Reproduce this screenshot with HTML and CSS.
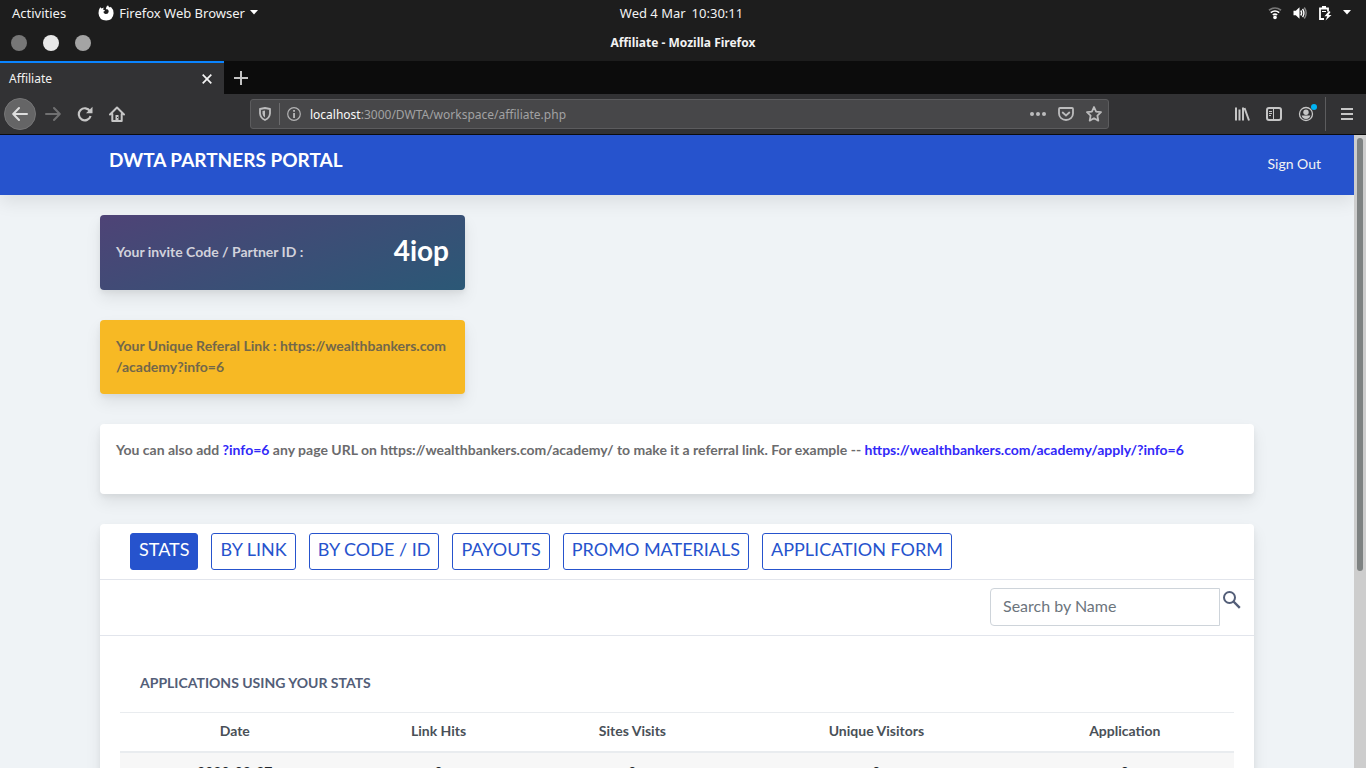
FILE: index.html
```html
<!DOCTYPE html>
<html lang="en">
<head>
<meta charset="utf-8">
<title>Affiliate</title>
<link rel="stylesheet" href="styles.css">
</head>
<body>
<div class="topbar">
  <div class="topbar-left">
    <button class="plain" type="button">Activities</button>
    <button class="plain app-menu" type="button">
      <svg width="16" height="16" viewBox="0 0 16 16"><path fill="#fff" d="M2.2 2.2 3.6 3.6Q4.600 2.700 6 2.800Q5 3.500 5.200 4.700L7 5.200Q6.700 6.400 5.400 6.800Q5.500 8.700 7.600 9Q10.300 9.200 10.700 6.800Q10.800 5 9.400 4.200L7.800 4.300Q8 1.500 10 .3Q10.600 2 12 2.600L12.800 1.800Q15.700 4.500 15.600 8.200Q15.200 15 8.200 15.600Q1 15.200.5 8.200Q.5 4.600 2.200 2.200Z"/></svg>
      <span>Firefox Web Browser</span>
      <svg width="8" height="5" viewBox="0 0 8 5"><path fill="#fff" d="M0 0h8L4 4.500z"/></svg>
    </button>
  </div>
  <div class="clock"><span>Wed 4 Mar</span><span>10:30:11</span></div>
  <div class="topbar-right">
    <svg width="14" height="14" viewBox="0 0 14 14" fill="none" stroke-width="1.700"><path stroke="#777" d="M1 4.200Q7-.2 13 4.200"/><path stroke="#fff" d="M2.800 6.600Q7 3.400 11.200 6.600M4.800 8.900Q7 7.200 9.200 8.900"/><circle cx="7" cy="11.400" r="1.800" fill="#fff"/></svg>
    <svg width="14" height="14" viewBox="0 0 14 14" fill="none" stroke-width="1.400"><path fill="#fff" d="M.5 4.700h2.300L6.500 1.200v11.600L2.800 9.300H.5z"/><path stroke="#fff" d="M7.800 4.500Q9.500 7 7.800 9.500M9.600 2.800Q12.300 7 9.600 11.200"/><path stroke="#888" d="M11.300 1.500Q15 7 11.300 12.500"/></svg>
    <svg width="14" height="16" viewBox="0 0 14 16"><path fill="none" stroke="#fff" stroke-width="1.800" d="M6 14H2V3.500H10V6.500"/><path fill="#fff" d="M4 1h4v2H4zM4 6h4v1H4z"/><path fill="#fff" d="M11 6 6.500 11.200h2.800L7.500 15.500 13.500 10h-3l2-3z"/></svg>
    <svg width="8" height="5" viewBox="0 0 8 5"><path fill="#fff" d="M0 0h8L4 4.500z"/></svg>
  </div>
</div>
<div class="titlebar">
  <div class="window-buttons"><button type="button" class="dot dot-dim" aria-label="Close"></button><button type="button" class="dot dot-bright" aria-label="Minimise"></button><button type="button" class="dot dot-mid" aria-label="Maximise"></button></div>
  <div class="window-title">Affiliate - Mozilla Firefox</div>
</div>
<div class="tabstrip">
  <div class="tab">
    <span>Affiliate</span>
    <button class="plain" type="button" aria-label="Close tab"><svg width="10" height="10" viewBox="0 0 10 10"><path stroke="#f5f5f5" stroke-width="1.700" d="m.7.7 8.600 8.600m0-8.600L.7 9.300"/></svg></button>
  </div>
  <button class="plain new-tab" type="button" aria-label="New tab"><svg width="14" height="14" viewBox="0 0 14 14"><path stroke="#c4c4c4" stroke-width="2" d="M7 0v14M0 7h14"/></svg></button>
</div>
<div class="toolbar">
  <div class="nav-buttons">
    <button type="button" class="back" aria-label="Back"><svg width="16" height="16" viewBox="0 0 16 16"><path fill="none" stroke="#dedede" stroke-width="2" stroke-linecap="round" stroke-linejoin="round" d="M15 8H1.500M7 2 1.200 8 7 14"/></svg></button>
    <button type="button" class="plain" aria-label="Forward"><svg width="16" height="16" viewBox="0 0 16 16"><path fill="none" stroke="#707071" stroke-width="2" stroke-linecap="round" stroke-linejoin="round" d="M1 8h13.500M9 2l5.800 6L9 14"/></svg></button>
    <button type="button" class="plain" aria-label="Reload"><svg width="16" height="16" viewBox="0 0 16 16"><path fill="none" stroke="#c6c6c6" stroke-width="2.200" d="M13 5.200A6 6 0 1 0 13.600 10"/><path fill="#c6c6c6" d="M15.500.8v6.400H9z"/></svg></button>
    <button type="button" class="plain" aria-label="Home"><svg width="16" height="16" viewBox="0 0 16 16"><path fill="none" stroke="#c6c6c6" stroke-width="2" stroke-linejoin="round" stroke-linecap="round" d="M1 8.500 8 1.500l7 7M3.300 8v7h9.400V8"/><path fill="#c6c6c6" d="M6.500 9h3v5h-3z"/><path fill="#323234" d="M8 11h1v1H8z"/></svg></button>
  </div>
  <div class="urlbar">
    <svg width="12" height="14" viewBox="0 0 12 14"><path fill="none" stroke="#bcbcbd" stroke-width="1.800" stroke-linejoin="round" d="M6 1 11 2v4.500Q10.600 11 6 13Q1.400 11 1 6.500V2z"/><path fill="#bcbcbd" d="M6 3.500v7Q3.800 9.500 3.500 6.500V4z"/></svg>
    <span class="url-divider"></span>
    <svg width="14" height="14" viewBox="0 0 14 14"><circle cx="7" cy="7" r="6.300" fill="none" stroke="#b4b4b5" stroke-width="1.200"/><path fill="#b4b4b5" d="M6.100 3h1.900v1.800H6.100zM6.100 6h1.900v5H6.100z"/></svg>
    <div class="url"><strong>localhost</strong>:3000/DWTA/workspace/affiliate.php</div>
    <div class="url-actions">
      <svg width="16" height="16" viewBox="0 0 16 16"><g fill="#bcbcbd"><circle cx="2" cy="8" r="2"/><circle cx="8" cy="8" r="2"/><circle cx="14" cy="8" r="2"/></g></svg>
      <svg width="16" height="16" viewBox="0 0 16 16"><path fill="none" stroke="#bcbcbd" stroke-width="1.800" stroke-linejoin="round" d="M2 2h12q1 0 1 1v4.500a7 6.500 0 0 1-14 0V3q0-1 1-1z"/><path fill="none" stroke="#bcbcbd" stroke-width="1.800" stroke-linecap="round" d="m4.700 6.500 3.300 3 3.300-3"/></svg>
      <svg width="16" height="16" viewBox="0 0 16 16"><path fill="none" stroke="#bcbcbd" stroke-width="1.800" stroke-linejoin="round" d="m8 1 2.100 4.600 4.900.6-3.600 3.400.9 5L8 12.200l-4.300 2.400.9-5L1 6.200l4.900-.6z"/></svg>
    </div>
  </div>
  <div class="tool-buttons">
    <button type="button" class="plain" aria-label="Library"><svg width="16" height="16" viewBox="0 0 16 16"><path stroke="#c6c6c6" stroke-width="2" d="M2 1.500v13M5.500 3.500v11M9 1.500v13M10.500 2l4.500 12.500"/></svg></button>
    <button type="button" class="plain" aria-label="Sidebar"><svg width="16" height="16" viewBox="0 0 16 16"><rect x="1" y="2" width="14" height="12" rx="2" fill="none" stroke="#c6c6c6" stroke-width="2"/><path stroke="#c6c6c6" d="M7.500 3v10M3 5.500h3M3 7.500h3M3 9.500h2"/></svg></button>
    <button type="button" class="plain account" aria-label="Account"><svg width="16" height="16" viewBox="0 0 16 16"><circle cx="8" cy="8" r="6.500" fill="none" stroke="#c6c6c6" stroke-width="1.300"/><circle cx="8" cy="6.200" r="2.700" fill="#c6c6c6"/><path fill="#c6c6c6" d="M3.600 9.500h8.800Q11.500 12.800 8 13Q4.500 12.800 3.600 9.500z"/></svg><span class="account-dot"></span></button>
    <span class="tool-divider"></span>
    <button type="button" class="plain" aria-label="Menu"><svg width="12" height="14" viewBox="0 0 12 14"><path stroke="#c6c6c6" stroke-width="2" d="M0 2h12M0 7h12M0 12h12"/></svg></button>
  </div>
</div>
<div class="viewport">
  <div class="page">
    <header class="site-header">
      <h1>DWTA PARTNERS PORTAL</h1>
      <a href="#">Sign Out</a>
    </header>
    <main class="content">
      <section class="card invite">
        <span>Your invite Code / Partner ID :</span>
        <strong>4iop</strong>
      </section>
      <section class="card referral">Your Unique Referal Link : https://wealthbankers.com<wbr>/academy?info=6</section>
      <section class="card hint">You can also add <b>?info=6</b> any page URL on https://wealthbankers.com/academy/ to make it a referral link. For example -- <b>https://wealthbankers.com/academy/apply/?info=6</b></section>
      <section class="card panel">
        <nav class="tabs">
          <button type="button" class="active">STATS</button>
          <button type="button">BY LINK</button>
          <button type="button">BY CODE / ID</button>
          <button type="button">PAYOUTS</button>
          <button type="button">PROMO MATERIALS</button>
          <button type="button">APPLICATION FORM</button>
        </nav>
        <form class="search">
          <input type="text" placeholder="Search by Name" aria-label="Search by Name">
          <button type="button" class="plain" aria-label="Search"><svg width="18" height="18" viewBox="0 0 18 18"><circle cx="6.500" cy="6.500" r="5.500" fill="none" stroke="#535e78" stroke-width="2"/><path stroke="#535e78" stroke-width="2.400" d="m10.500 10.500 6.300 6.300"/></svg></button>
        </form>
        <h2>APPLICATIONS USING YOUR STATS</h2>
        <table class="stats">
          <thead><tr><th class="c-date">Date</th><th class="c-hits">Link Hits</th><th class="c-visits">Sites Visits</th><th class="c-unique">Unique Visitors</th><th class="c-app">Application</th></tr></thead>
          <tbody><tr><td>2020-02-27</td><td>0</td><td>0</td><td>0</td><td>0</td></tr></tbody>
        </table>
      </section>
    </main>
  </div>
  <div class="scrollbar"><div class="thumb"></div></div>
</div>
</body>
</html>
```
FILE: styles.css
```css
* { box-sizing: border-box; }
body {
  margin: 0;
  height: 100vh;
  display: flex;
  flex-direction: column;
  overflow: hidden;
  font-family: "Noto Sans", "Open Sans", sans-serif;
  font-size: 13px;
  color: #f2f2f2;
  background: #1d1d1d;
}
svg { display: block; flex: none; }
button { font: inherit; cursor: pointer; }
.plain {
  display: flex;
  align-items: center;
  padding: 0;
  border: 0;
  background: none;
  color: inherit;
}

/* Desktop bar */
.topbar {
  flex: none;
  display: grid;
  grid-template-columns: 1fr auto 1fr;
  align-items: center;
  height: 25px;
  padding: 0 15px 0 12px;
}
.topbar-left { display: flex; gap: 32px; }
.app-menu { gap: 5px; }
.clock { display: flex; gap: 6px; }
.topbar-right { display: flex; align-items: center; justify-content: flex-end; gap: 11px; }

/* Window title */
.titlebar {
  flex: none;
  display: grid;
  grid-template-columns: 1fr auto 1fr;
  align-items: center;
  height: 36px;
  padding: 0 11px;
}
.window-buttons { display: flex; gap: 16px; }
.dot { width: 16px; height: 16px; padding: 0; border: 0; border-radius: 50%; }
.dot-dim { background: #777; }
.dot-bright { background: #e8e8e8; }
.dot-mid { background: #a4a4a4; }
.window-title { padding-bottom: 2px; font-size: 12px; font-weight: 700; }

/* Browser tabs */
.tabstrip { flex: none; display: flex; height: 33px; background: #0c0c0c; }
.tab {
  display: flex;
  align-items: center;
  justify-content: space-between;
  width: 224px;
  padding: 0 12px 0 9px;
  border-top: 2px solid #0a84ff;
  background: #323234;
  font-size: 12px;
}
.new-tab { padding: 0 10px; }

/* Navigation toolbar */
.toolbar {
  flex: none;
  display: flex;
  align-items: center;
  height: 41px;
  border-bottom: 1px solid #0c0c0d;
  background: #323234;
}
.nav-buttons { display: flex; align-items: center; gap: 16px; padding-left: 4px; }
.back {
  display: flex;
  align-items: center;
  justify-content: center;
  width: 32px;
  height: 32px;
  margin-right: -7px;
  padding: 0;
  border: 1px solid #767677;
  border-radius: 50%;
  background: #656566;
}
.urlbar {
  flex: 1;
  display: flex;
  align-items: center;
  height: 30px;
  margin: 0 125px;
  padding: 0 6px 0 8px;
  border: 1px solid #5c5c5e;
  border-radius: 3px;
  background: #474749;
}
.url-divider { width: 1px; height: 22px; margin: 0 7px 0 8px; background: #6b6b6d; }
.url { flex: 1; padding-left: 9px; color: #a2a2a3; font-size: 12px; }
.url strong { color: #fafafa; font-weight: 400; }
.url-actions { display: flex; gap: 12px; }
.tool-buttons { display: flex; align-items: center; gap: 16px; padding-right: 13px; }
.account { position: relative; }
.account-dot { position: absolute; top: -2px; right: -3px; width: 6px; height: 6px; border-radius: 50%; background: #00b3f4; }
.tool-divider { width: 1px; height: 34px; margin: 0 -1px 0 -5px; background: #5c5c5e; }

/* Page */
.viewport {
  flex: 1;
  min-height: 0;
  display: flex;
  font-family: Lato, sans-serif;
  font-size: 14px;
  font-weight: 700;
  line-height: 21px;
}
.page { flex: 1; min-width: 0; overflow: hidden; background: #eff3f6; }
.scrollbar { width: 12px; padding: 3px; background: #cdcdcd; }
.thumb { height: 69%; border-radius: 3px; background: #7e8282; }
.site-header {
  display: flex;
  justify-content: space-between;
  height: 60px;
  padding: 10px 33px 0 109px;
  background: #2653cd;
  box-shadow: 0 8px 16px rgba(0, 0, 0, .08);
}
.site-header h1 { margin: 0; font-size: 19px; font-weight: 700; line-height: 30px; color: #fff; }
.site-header a { padding-top: 8px; color: #f2f2f2; font-weight: 400; text-decoration: none; }
.content { display: flex; flex-direction: column; gap: 30px; padding: 20px 100px; }
.card {
  padding: 15px 16px 17px;
  border-radius: 4px;
  background: #fff;
  color: #6b6b6d;
  box-shadow: 0 8px 16px rgba(0, 0, 0, .08), 0 3px 5px rgba(0, 0, 0, .05);
}
.invite, .referral { width: 365px; }
.invite {
  display: flex;
  align-items: center;
  justify-content: space-between;
  height: 75px;
  background: linear-gradient(160deg, #4e4376, #2b5876);
  color: #d2d2dc;
}
.invite strong { padding-bottom: 4px; font-size: 28px; font-weight: 700; line-height: 36px; color: #fff; }
.referral { background: #f7b924; color: #72674a; }
.hint { min-height: 70px; }
.hint b { font-weight: 700; color: #3229f8; }
.panel { padding: 0; color: #495057; }
.tabs { display: flex; gap: 13px; padding: 9px 30px; border-bottom: 1px solid #e2e5ec; }
.tabs button {
  height: 37px;
  padding: 0 8px 4px;
  border: 1px solid #2653cd;
  border-radius: 3px;
  background: #fff;
  color: #2653cd;
  font-size: 18px;
  font-weight: 400;
}
.tabs .active { background: #2653cd; color: #fff; }
.search {
  display: flex;
  align-items: flex-start;
  justify-content: flex-end;
  gap: 3px;
  padding: 8px 13px 9px;
  border-bottom: 1px solid #e2e5ec;
}
.search input {
  width: 230px;
  height: 38px;
  padding: 0 12px 3px;
  border: 1px solid #ced4da;
  border-radius: 4px 0 0 4px;
  font: 400 16px Lato, sans-serif;
}
.search input::placeholder { color: #6c757d; }
.search button { padding-top: 3px; }
.panel h2 { margin: 0; padding: 37px 40px 19px; font-size: 14px; font-weight: 700; line-height: 20px; color: #535e78; }
.stats { width: calc(100% - 40px); margin: 0 20px; border-collapse: separate; border-spacing: 0; table-layout: fixed; text-align: center; }
.stats th { padding: 7px 0 10px; border-top: 1px solid #e9ecef; border-bottom: 2px solid #e9ecef; font-weight: 700; }
.stats td { padding: 8px 0; background: #f7f7f7; color: #212529; }
.c-date { width: 20.6%; }
.c-hits { width: 16%; }
.c-visits { width: 18.8%; }
.c-unique { width: 25%; }
.c-app { width: 19.6%; }
```
